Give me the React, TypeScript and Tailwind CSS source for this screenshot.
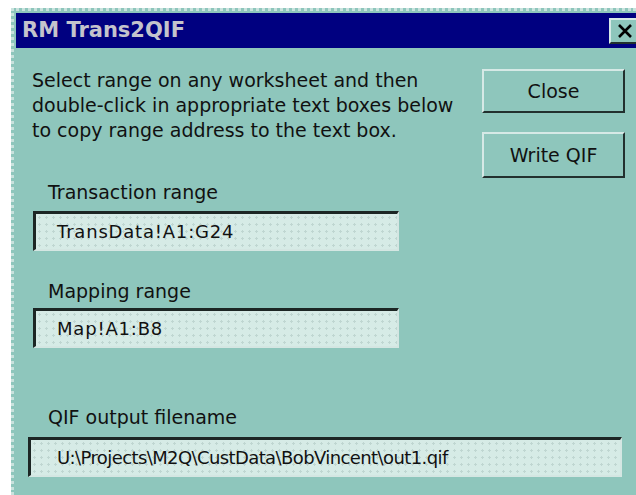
import { ReactNode } from 'react'

const font = "font-['DejaVu_Sans',Tahoma,Verdana,sans-serif]"

type TFieldParams = {
  label: string
  value: string
  className?: string
  labelClassName?: string
  valueClassName?: string
}

const RangeField = ({ label, value, className, labelClassName, valueClassName }: TFieldParams) => {
  return (
    <div className="flex flex-col">
      <span className={`text-[19px] leading-[25px] text-[#111] ${labelClassName ?? ''}`}>{label}</span>
      <div
        className={`flex items-center h-[40px] border-t-[3px] border-l-[3px] border-t-[#1c2624] border-l-[#1c2624] border-r-2 border-b-2 border-r-[#d4e6e2] border-b-[#d4e6e2] bg-[#d6ebe6] bg-[radial-gradient(#bfd6d1_1px,transparent_1.2px)] bg-[length:7px_7px] ${className ?? ''}`}
      >
        <span className={`text-[18px] text-[#111] whitespace-nowrap ${valueClassName ?? 'pl-[21px] tracking-[0.8px]'}`}>
          {value}
        </span>
      </div>
    </div>
  )
}

const DialogButton = ({ children, className }: { children: ReactNode; className?: string }) => {
  return (
    <button
      className={`w-[143px] flex items-center justify-center border-t-2 border-l-2 border-dotted border-t-[#d6e9e6] border-l-[#d6e9e6] border-r-2 border-b-2 border-r-[#22302e] border-b-[#22302e] border-solid bg-[#8ec6bc] text-[19px] text-[#111] ${className ?? ''}`}
    >
      {children}
    </button>
  )
}

export default function App() {
  return (
    <div className={`w-[636px] h-[495px] bg-white overflow-hidden ${font}`}>
      <div className="ml-[11px] mt-[8px] h-[487px] border-t-[3px] border-l-[3px] border-dotted border-[#c9e2dd] bg-[#8ec6bc] flex flex-col">
        {/* title bar */}
        <div className="ml-[2px] mt-[2px] h-[35px] bg-[#000080] flex items-center justify-between">
          <span className="pl-[6px] text-[21px] font-bold text-[#c4c4cc]">RM Trans2QIF</span>
          <div className="w-[30px] h-[26px] mr-[-3px] bg-[#8ec6bc] border-t-2 border-l-2 border-t-[#d6e9e6] border-l-[#d6e9e6] border-b-2 border-b-[#22302e] flex items-center justify-center">
            <svg width="16" height="14" viewBox="0 0 16 14">
              <path d="M2 1 L14 13 M14 1 L2 13" stroke="#000" strokeWidth="2.6" />
            </svg>
          </div>
        </div>

        <div className="flex pt-[21px]">
          <p className="ml-[18px] w-[450px] text-[19px] leading-[25px] text-[#111] -mt-[1px] whitespace-nowrap">
            Select range on any worksheet and then
            <br />
            double-click in appropriate text boxes below
            <br />
            to copy range address to the text box.
          </p>
          <div className="flex flex-col gap-[19px]">
            <DialogButton className="h-[44px]">Close</DialogButton>
            <DialogButton className="h-[46px]">Write QIF</DialogButton>
          </div>
        </div>

        <div className="mt-[2px] ml-[19px] w-[366px]">
          <RangeField label="Transaction range" value="TransData!A1:G24" labelClassName="pl-[15px] pb-[6px]" />
        </div>
        <div className="mt-[28px] ml-[19px] w-[366px]">
          <RangeField label="Mapping range" value="Map!A1:B8" labelClassName="pl-[15px] pb-[4px]" />
        </div>
        <div className="mt-[57px] ml-[14px] w-[594px]">
          <RangeField
            label="QIF output filename"
            value="U:\Projects\M2Q\CustData\BobVincent\out1.qif"
            labelClassName="pl-[20px] pb-[7px]"
            valueClassName="pl-[26px] tracking-[-0.6px]"
          />
        </div>
      </div>
    </div>
  )
}
